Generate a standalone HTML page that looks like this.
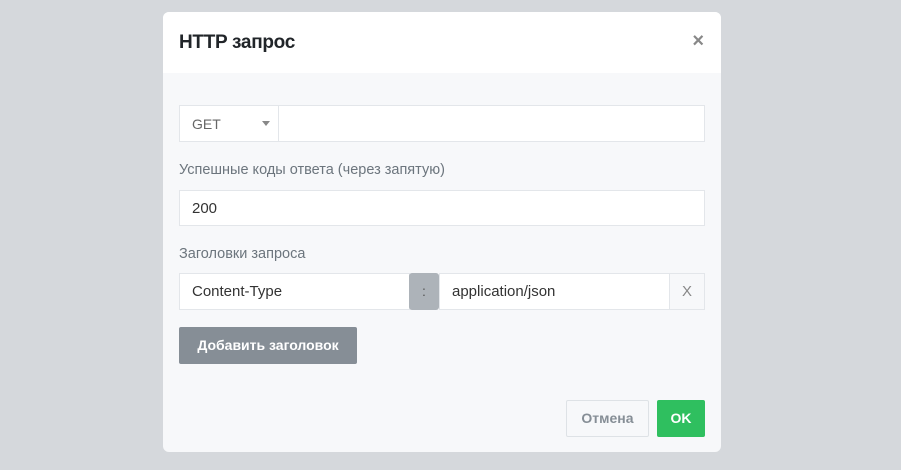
<!DOCTYPE html>
<html><head><meta charset="utf-8"><style>
*{box-sizing:border-box;margin:0;padding:0}
body{width:901px;height:470px;background:#d5d8dc;font-family:"Liberation Sans",sans-serif;position:relative;overflow:hidden}
.m{position:absolute;left:163px;top:12px;width:558px;height:440px;background:#f7f8fa;border-radius:6px;overflow:hidden}
.h{height:61px;background:#fff;position:relative}
.h .t{position:absolute;left:16px;top:20px;font-size:19px;color:#212529;font-weight:bold;letter-spacing:-0.3px}
.h .x{position:absolute;right:17px;top:18px;font-size:20px;color:#888;font-weight:bold}
.a{position:absolute;border:1px solid #e3e6ea;background:#fff;font-size:15px;color:#333;display:flex;align-items:center;padding-left:12px}
.l{position:absolute;font-size:14.5px;color:#6c757d}
</style></head><body>
<div class="m">
<div class="h"><div class="t">HTTP запрос</div><div class="x">×</div></div>
<div class="a" style="left:16px;top:93px;width:100px;height:37px;color:#666;font-size:14px">GET<span style="position:absolute;left:82px;top:15px;border:4px solid transparent;border-top:5px solid #888"></span></div>
<div class="a" style="left:115px;top:93px;width:427px;height:37px"></div>
<div class="l" style="left:16px;top:150px">Успешные коды ответа (через запятую)</div>
<div class="a" style="left:16px;top:178px;width:526px;height:36px">200</div>
<div class="l" style="left:16px;top:234px">Заголовки запроса</div>
<div class="a" style="left:16px;top:261px;width:231px;height:37px">Content-Type</div>
<div style="position:absolute;left:246px;top:261px;width:30px;height:37px;background:#adb3b9;border-radius:3px;color:#555;text-align:center;line-height:37px;font-size:14px">:</div>
<div class="a" style="left:276px;top:261px;width:231px;height:37px">application/json</div>
<div class="a" style="left:506px;top:261px;width:36px;height:37px;background:#f7f8fa;color:#888;padding-left:12px;font-size:15px">X</div>
<div style="position:absolute;left:16px;top:315px;width:178px;height:37px;background:#868e96;border-radius:2px;color:#fff;font-weight:bold;font-size:14px;line-height:37px;text-align:center">Добавить заголовок</div>
<div style="position:absolute;left:403px;top:388px;width:83px;height:37px;border:1px solid #dee2e6;border-radius:2px;color:#868e96;font-weight:bold;font-size:14px;line-height:35px;text-align:center">Отмена</div>
<div style="position:absolute;left:494px;top:388px;width:48px;height:37px;background:#2fbf5f;border-radius:2px;color:#fff;font-weight:bold;font-size:14px;line-height:37px;text-align:center">OK</div>
</div>
</body></html>
